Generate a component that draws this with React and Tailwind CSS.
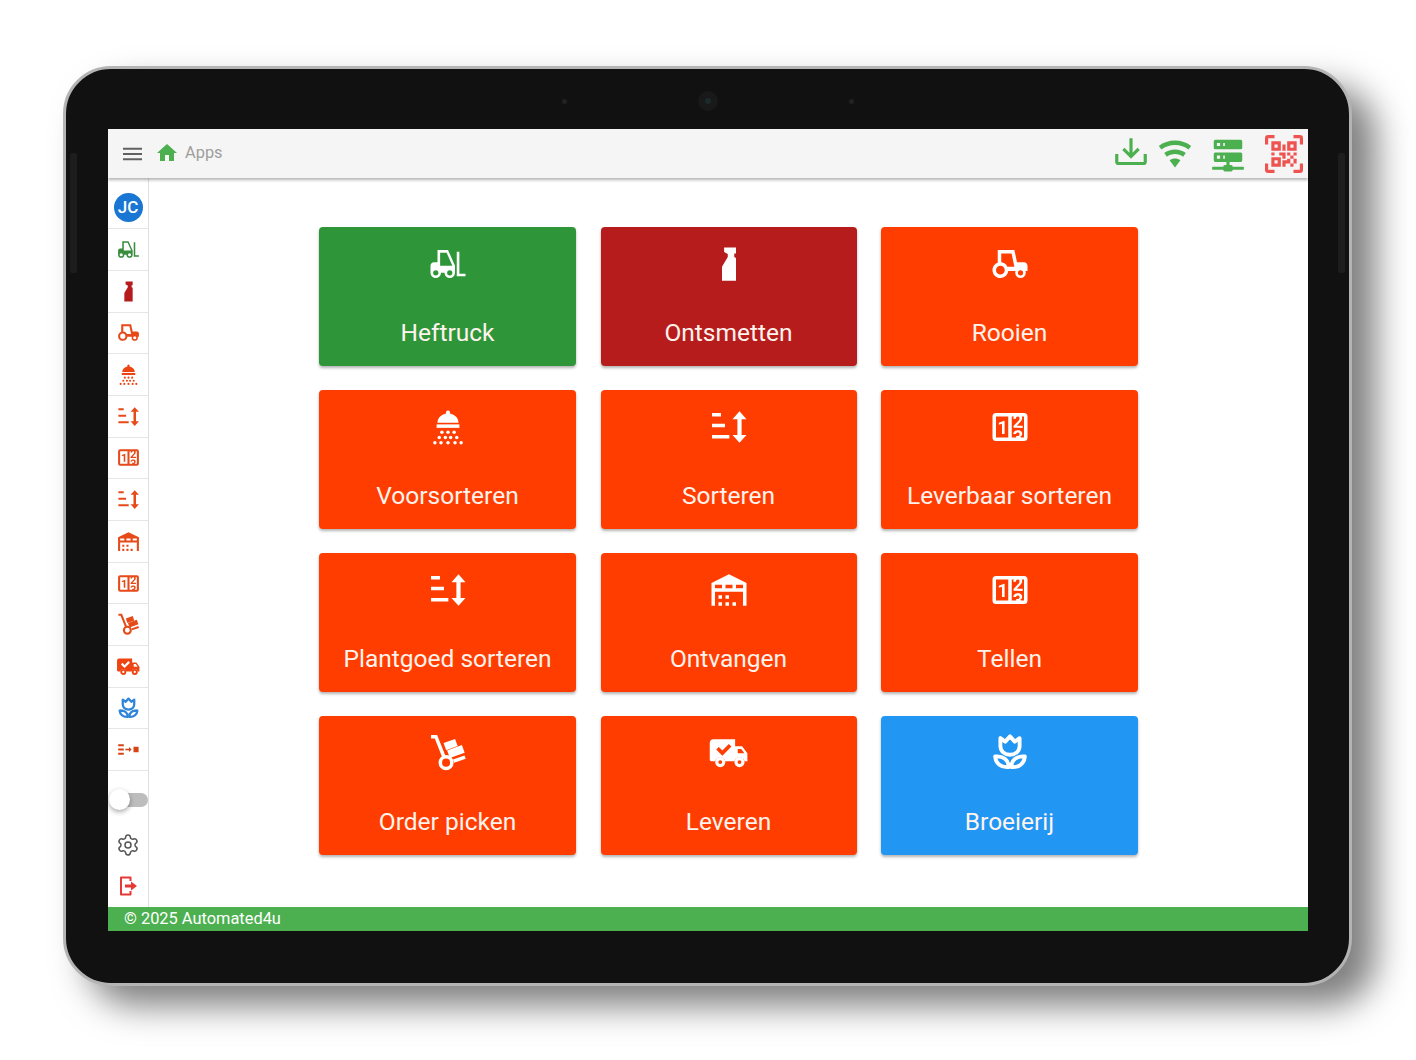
import { Settings } from "lucide-react";

const icons = {
  forklift: (
    <path d="M6,4V11H4C2.89,11 2,11.89 2,13V17A3,3 0 0,0 5,20A3,3 0 0,0 8,17H10A3,3 0 0,0 13,20A3,3 0 0,0 16,17V13L12,4H6M17,5V19H22V17.5H18.5V5H17M7.5,5.5H11.2L14.5,13H7.5V5.5M5,15.5A1.5,1.5 0 0,1 6.5,17A1.5,1.5 0 0,1 5,18.5A1.5,1.5 0 0,1 3.5,17A1.5,1.5 0 0,1 5,15.5M13,15.5A1.5,1.5 0 0,1 14.5,17A1.5,1.5 0 0,1 13,18.5A1.5,1.5 0 0,1 11.5,17A1.5,1.5 0 0,1 13,15.5Z" />
  ),
  spray: <path d="M9.2 2.5H16V6H15V8L16 8.5V21.5H8V13.5L11.3 8V6.3L9.2 5.2Z" />,
  tractor: (
    <path
      fillRule="evenodd"
      d="M5 4H14.5L16 11H20C21.1 11 22 11.9 22 13V16H20.8C21 16.3 21 16.7 21 17A3 3 0 0 1 15 17C15 16.7 15.1 16.3 15.2 16H11C10.7 18.3 8.8 20 6.5 20C4 20 2 18 2 15.5C2 13.6 3.2 11.9 5 11.3ZM7 6V11C8.5 11.1 9.8 12 10.5 13.5H14.5L12.9 6ZM6.5 13a2.5 2.5 0 1 0 0 5 2.5 2.5 0 1 0 0-5ZM18 15.5a1.5 1.5 0 1 0 0 3 1.5 1.5 0 1 0 0-3Z"
    />
  ),
  shower: (
    <>
      <path d="M12 2.5a1.2 1.2 0 0 1 1 1.8C16 4.9 18 7 18 9.5H6C6 7 8 4.9 11 4.3A1.2 1.2 0 0 1 12 2.5Z" />
      <path d="M5.5 10.5H18.5V12.5H5.5Z" />
      {[[8.5, 15], [12, 15], [15.5, 15], [7, 18], [10.5, 18], [13.5, 18], [17, 18], [4.5, 21], [8, 21], [12, 21], [16, 21], [19.5, 21]].map(([x, y]) => (
        <circle key={x + "-" + y} cx={x} cy={y} r="1" />
      ))}
    </>
  ),
  sort: <path d="M2.3 4H7.4V6H2.3ZM2.3 10.2H9.7V12.2H2.3ZM2.3 16.5H12.2V18.5H2.3ZM18 3L22 7.5H19.2V16.5H22L18 21L14 16.5H16.8V7.5H14Z" />,
  counter: (
    <path d="M4,4H20A2,2 0 0,1 22,6V18A2,2 0 0,1 20,20H4A2,2 0 0,1 2,18V6A2,2 0 0,1 4,4M4,6V18H11V6H4M20,18V6H18.76C19,6.54 18.95,7.07 18.95,7.13C18.88,7.8 18.41,8.5 18.24,8.75L15.91,11.3L19.23,11.28L19.24,12.5L14.04,12.47L14,11.47C14,11.47 17.05,8.24 17.2,7.95C17.34,7.67 17.91,6 16.5,6C15.27,6.05 15.41,7.3 15.41,7.3L13.87,7.31C13.87,7.31 13.88,6.65 14.25,6H13V18H15.58L15.57,17.14L16.54,17.13C16.54,17.13 17.45,16.97 17.46,16.08C17.5,15.08 16.65,15.08 16.5,15.08C16.37,15.08 15.43,15.13 15.43,15.95H13.91C13.91,15.95 13.95,13.89 16.5,13.89C19.1,13.89 18.96,15.91 18.96,15.91C18.96,15.91 19,17.16 17.85,17.63L18.37,18H20M8.92,16H7.42V10.2L5.62,10.76V9.53L8.76,8.41H8.92V16Z" />
  ),
  warehouse: (
    <path d="M6 19H8V21H6V19M12 3L2 8V21H4V13H20V21H22V8L12 3M8 11H4V9H8V11M14 11H10V9H14V11M20 11H16V9H20V11M6 15H8V17H6V15M10 15H12V17H10V15M10 19H12V21H10V19M14 19H16V21H14V19Z" />
  ),
  dolly: (
    <>
      <path d="M2.3 2.7H5.1L9.6 14" fill="none" stroke="currentColor" strokeWidth="2" />
      <circle cx="10.9" cy="17.5" r="3.3" fill="none" stroke="currentColor" strokeWidth="2" />
      <rect x="10" y="5" width="7" height="4.4" transform="rotate(-20 13.5 7.2)" />
      <rect x="12" y="8.9" width="9" height="4.6" transform="rotate(-20 16.5 11.2)" />
      <rect x="15" y="14.5" width="7" height="2" transform="rotate(-20 18.5 15.5)" />
    </>
  ),
  truck: (
    <g transform="translate(0 -0.8)">
      <path
        fillRule="evenodd"
        d="M3 5H15.5V9H19.5L22.5 13V17.5H20.9A3 3 0 0 0 15.1 17.5H9.9A3 3 0 0 0 4.1 17.5H2C1.4 17.5 1 17 1 16.5V7C1 5.9 1.9 5 3 5ZM17 10.5V13H20.8L19 10.5ZM4.7 10.8L6.2 9.3L8.2 11.3L11.9 7.6L13.4 9.1L8.2 14.3Z"
      />
      <circle cx="7" cy="18" r="2" fill="none" stroke="currentColor" strokeWidth="1.8" />
      <circle cx="18" cy="18" r="2" fill="none" stroke="currentColor" strokeWidth="1.8" />
    </g>
  ),
  tulip: (
    <g fill="none" stroke="currentColor" strokeWidth="2.2" strokeLinejoin="round">
      <path d="M6.5 3.5V8C6.5 11 9 13 12 13C15 13 17.5 11 17.5 8V3.5L14.7 5.5L12 2.5L9.3 5.5Z" />
      <path d="M3.5 14C8 13.5 11.3 16 11.3 20C7 20.5 3.8 18 3.5 14Z" />
      <path d="M20.5 14C16 13.5 12.7 16 12.7 20C17 20.5 20.2 18 20.5 14Z" />
    </g>
  ),
  flow: <path d="M2.1 7H7.5V8.8H2.1ZM2.1 11.1H7.5V12.9H2.1ZM2.1 15.2H7.5V17H2.1ZM9 11.2H12.5V9.5L15 12L12.5 14.5V12.8H9ZM16.8 9.3H21.7V14.7H16.8Z" />,
  exit: (
    <>
      <path d="M14.5 7V3.5H5V20.5H14.5V17" fill="none" stroke="currentColor" strokeWidth="2" strokeLinejoin="round" />
      <path d="M9 10.5H15V7.5L21 12L15 16.5V13.5H9Z" />
    </>
  ),
  home: <path d="M10,20V14H14V20H19V12H22L12,3L2,12H5V20H10Z" />,
  download: (
    <path d="M2 12H4V17H20V12H22V17C22 18.11 21.11 19 20 19H4C2.9 19 2 18.11 2 17V12M12 15L17.55 9.54L16.13 8.13L13 11.25V2H11V11.25L7.88 8.13L6.46 9.55L12 15Z" />
  ),
  wifi: (
    <path d="M12,21L15.6,16.2C14.6,15.45 13.35,15 12,15C10.65,15 9.4,15.45 8.4,16.2L12,21M12,3C7.95,3 4.21,4.34 1.2,6.6L3,9C5.5,7.12 8.62,6 12,6C15.38,6 18.5,7.12 21,9L22.8,6.6C19.79,4.34 16.05,3 12,3M12,9C9.3,9 6.81,9.89 4.8,11.4L6.6,13.8C8.1,12.67 9.97,12 12,12C14.03,12 15.9,12.67 17.4,13.8L19.2,11.4C17.19,9.89 14.7,9 12,9Z" />
  ),
  server: (
    <path d="M13,19H14A1,1 0 0,1 15,20H22V22H15A1,1 0 0,1 14,23H10A1,1 0 0,1 9,22H2V20H9A1,1 0 0,1 10,19H11V17H4A1,1 0 0,1 3,16V12A1,1 0 0,1 4,11H20A1,1 0 0,1 21,12V16A1,1 0 0,1 20,17H13V19M4,3H20A1,1 0 0,1 21,4V8A1,1 0 0,1 20,9H4A1,1 0 0,1 3,8V4A1,1 0 0,1 4,3M9,7H10V5H9V7M9,15H10V13H9V15M5,5V7H7V5H5M5,13V15H7V13H5Z" />
  ),
  qr: (
    <path d="M4,4H10V10H4V4M20,4V10H14V4H20M14,15H16V13H14V11H16V13H18V11H20V13H18V15H20V18H18V20H16V18H13V20H11V16H14V15M16,15V18H18V15H16M4,20V14H10V20H4M6,6V8H8V6H6M16,6V8H18V6H16M6,16V18H8V16H6M4,11H6V13H4V11M9,11H13V15H11V13H9V11M11,6H13V10H11V6M2,2V6H0V2A2,2 0 0,1 2,0H6V2H2M22,0A2,2 0 0,1 24,2V6H22V2H18V0H22M2,18V22H6V24H2A2,2 0 0,1 0,22V18H2M22,22V18H24V22A2,2 0 0,1 22,24H18V22H22Z" />
  ),
};

function Icon({ name, className }) {
  return (
    <svg viewBox="0 0 24 24" fill="currentColor" className={className}>
      {icons[name]}
    </svg>
  );
}

const apps = [
  { label: "Heftruck", icon: "forklift", bg: "bg-[#2e9639]" },
  { label: "Ontsmetten", icon: "spray", bg: "bg-[#b71c1c]" },
  { label: "Rooien", icon: "tractor", bg: "bg-[#ff3d00]" },
  { label: "Voorsorteren", icon: "shower", bg: "bg-[#ff3d00]" },
  { label: "Sorteren", icon: "sort", bg: "bg-[#ff3d00]" },
  { label: "Leverbaar sorteren", icon: "counter", bg: "bg-[#ff3d00]" },
  { label: "Plantgoed sorteren", icon: "sort", bg: "bg-[#ff3d00]" },
  { label: "Ontvangen", icon: "warehouse", bg: "bg-[#ff3d00]" },
  { label: "Tellen", icon: "counter", bg: "bg-[#ff3d00]" },
  { label: "Order picken", icon: "dolly", bg: "bg-[#ff3d00]" },
  { label: "Leveren", icon: "truck", bg: "bg-[#ff3d00]" },
  { label: "Broeierij", icon: "tulip", bg: "bg-[#2196f3]" },
];

const sideItems = [
  { icon: "forklift", color: "text-[#388e3c]" },
  { icon: "spray", color: "text-[#b71c1c]" },
  { icon: "tractor", color: "text-[#e64a19]" },
  { icon: "shower", color: "text-[#ee4412]" },
  { icon: "sort", color: "text-[#e64a19]" },
  { icon: "counter", color: "text-[#e64a19]" },
  { icon: "sort", color: "text-[#e64a19]" },
  { icon: "warehouse", color: "text-[#e64a19]" },
  { icon: "counter", color: "text-[#e64a19]" },
  { icon: "dolly", color: "text-[#e64a19]" },
  { icon: "truck", color: "text-[#ee4412]" },
  { icon: "tulip", color: "text-[#2f86d8]" },
  { icon: "flow", color: "text-[#d84315]" },
];

function Sidebar() {
  return (
    <aside className="w-[41px] shrink-0 border-r border-[#e0e0e0] pt-[9.5px] flex flex-col items-stretch">
      <div className="h-[41.7px] flex items-center justify-center border-b border-[#e6e6e6]">
        <div className="w-[29px] h-[29px] rounded-full bg-[#1976d2] text-white text-[17px] font-medium flex items-center justify-center">JC</div>
      </div>
      {sideItems.map((it, i) => (
        <div key={i} className="h-[41.7px] flex items-center justify-center border-b border-[#e6e6e6]">
          <Icon name={it.icon} className={`w-[25px] h-[25px] ${it.color}`} />
        </div>
      ))}
      <div className="relative mt-[22px] ml-[4px] w-[36px] h-[14px] rounded-full bg-[#bdbdbd]">
        <div className="absolute -left-[3px] -top-[4px] w-[21px] h-[21px] rounded-full bg-white shadow-[0_2px_5px_rgba(0,0,0,0.35)]"></div>
      </div>
      <div className="mt-[26px] flex justify-center">
        <Settings className="w-6 h-6 text-[#555555]" strokeWidth={1.5} />
      </div>
      <div className="mt-[17px] flex justify-center">
        <Icon name="exit" className="w-6 h-6 text-[#e53935]" />
      </div>
    </aside>
  );
}

function Toolbar() {
  return (
    <header className="relative z-10 h-[49px] shrink-0 bg-[#f5f5f5] shadow-[0_2px_3px_rgba(0,0,0,0.3)] flex items-center pl-[15px] pr-[5px]">
      <svg viewBox="0 0 20 14" className="w-[19px] h-[14px] text-[#616161]" fill="none" stroke="currentColor" strokeWidth="2">
        <path d="M0 1.5H20M0 7H20M0 12.5H20" />
      </svg>
      <Icon name="home" className="ml-[13px] mb-[2px] w-6 h-6 text-[#4caf50]" />
      <span className="ml-[6px] text-[16.4px] text-[#9e9e9e]">Apps</span>
      <div className="ml-auto flex items-center">
        <Icon name="download" className="w-[38px] h-[38px] text-[#4caf50]" />
        <Icon name="wifi" className="ml-[7px] w-[36px] h-[36px] text-[#4caf50]" />
        <Icon name="server" className="ml-[16px] w-[38px] h-[38px] text-[#4caf50]" />
        <Icon name="qr" className="ml-[18px] w-[38px] h-[38px] text-[#ef5350]" />
      </div>
    </header>
  );
}

export default function App() {
  return (
    <div className="w-[1416px] h-[1060px] bg-white overflow-hidden pt-[66px] pl-[63px] font-['Roboto',sans-serif]">
      <div className="relative w-[1289px] h-[920px] rounded-[48px] border-[3px] border-[#b4b4b4] bg-[#111111] px-[42px] shadow-[24px_20px_34px_rgba(0,0,0,0.5)]">
        {/* side buttons */}
        <div className="absolute left-[4px] top-[84px] w-[7px] h-[120px] rounded-[2px] bg-[#1d1d1d]"></div>
        <div className="absolute right-[4px] top-[84px] w-[7px] h-[120px] rounded-[2px] bg-[#1d1d1d]"></div>

        {/* camera */}
        <div className="h-[60px] flex items-center justify-center gap-[131px] pt-[4px]">
          <div className="w-[5px] h-[5px] rounded-full bg-[#222222]"></div>
          <div className="w-[20px] h-[20px] rounded-full bg-[#191919] flex items-center justify-center">
            <div className="w-[6px] h-[6px] rounded-full bg-[#1c2a2a]"></div>
          </div>
          <div className="w-[5px] h-[5px] rounded-full bg-[#222222]"></div>
        </div>

        {/* screen */}
        <div className="w-[1200px] h-[802px] bg-white flex flex-col overflow-hidden">
          <Toolbar />
          <div className="flex-1 flex min-h-0">
            <Sidebar />
            <main className="flex-1 pt-[49px] pl-[170px]">
              <div className="w-[819px] grid grid-cols-[257px_256px_257px] gap-x-[24.5px] gap-y-[24px]">
                {apps.map((a) => (
                  <div key={a.label} className={`h-[139px] rounded-[4px] ${a.bg} text-white flex flex-col items-center pt-[16px] shadow-[0_2px_3px_rgba(0,0,0,0.3)]`}>
                    <Icon name={a.icon} className="w-[42px] h-[42px]" />
                    <div className="mt-[30px] text-[24.5px] leading-[36px] text-[#fff3ee] whitespace-nowrap">{a.label}</div>
                  </div>
                ))}
              </div>
            </main>
          </div>
          <footer className="h-[24px] shrink-0 bg-[#4caf50] text-white text-[16.4px] leading-[24px] pl-[16px]">© 2025 Automated4u</footer>
        </div>
      </div>
    </div>
  );
}
